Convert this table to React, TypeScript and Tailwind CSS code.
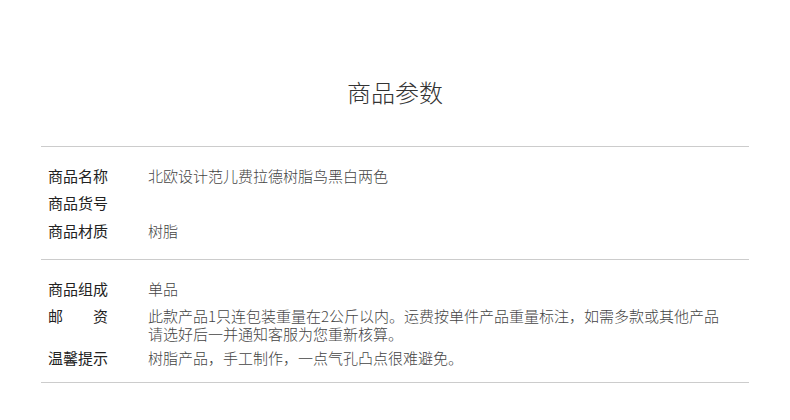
import React from "react";

const font = { fontFamily: '"Noto Sans CJK SC", "Noto Sans", sans-serif' };

function Row({ label, value, className = "" }: { label: React.ReactNode; value?: React.ReactNode; className?: string }) {
  return (
    <div className={`flex items-start text-[15px] leading-[18px] ${className}`}>
      <div className="w-[107px] shrink-0 pl-[7px] text-[#222]">{label}</div>
      <div className="w-[580px] font-light text-[#444]">{value}</div>
    </div>
  );
}

export default function App() {
  return (
    <div className="w-[790px] h-[420px] bg-white" style={font}>
      <div className="pt-[76px] text-center text-[24px] font-light leading-[32px] text-[#333]">商品参数</div>
      <div className="mx-auto mt-[38px] w-[708px]">
        <div className="border-t border-[#cccccc] pt-[20px] pb-[19px]">
          <Row label="商品名称" value="北欧设计范儿费拉德树脂鸟黑白两色" />
          <Row label="商品货号" className="mt-[9px]" />
          <Row label="商品材质" value="树脂" className="mt-[10px]" />
        </div>
        <div className="border-t border-[#cccccc] pt-[20px] pb-[15px]">
          <Row label="商品组成" value="单品" />
          <Row
            label={
              <span className="flex w-[60px] justify-between">
                <span>邮</span>
                <span>资</span>
              </span>
            }
            value="此款产品1只连包装重量在2公斤以内。运费按单件产品重量标注，如需多款或其他产品请选好后一并通知客服为您重新核算。"
            className="mt-[9px]"
          />
          <Row label="温馨提示" value="树脂产品，手工制作，一点气孔凸点很难避免。" className="mt-[6px]" />
        </div>
        <div className="border-t border-[#cccccc]" />
      </div>
    </div>
  );
}
